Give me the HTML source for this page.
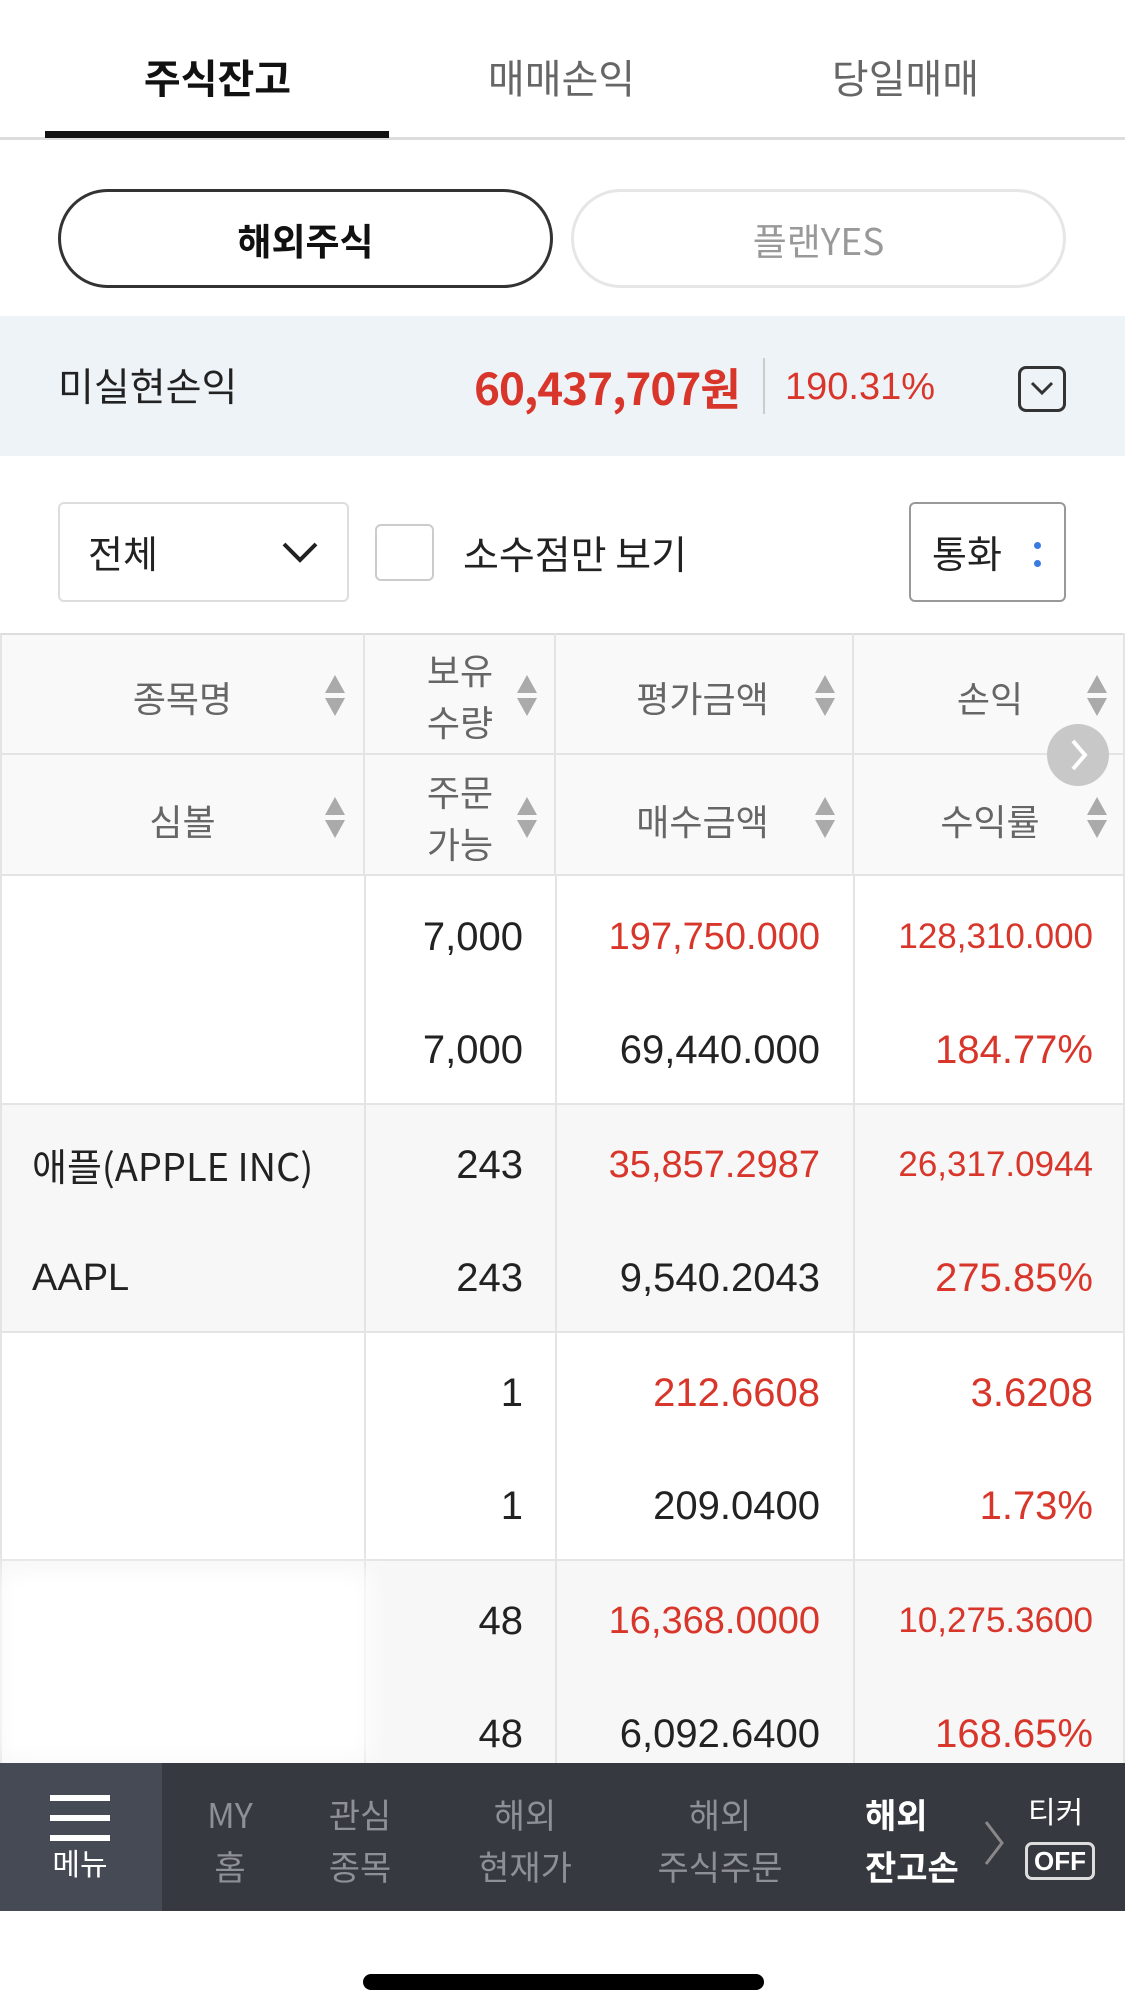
<!DOCTYPE html>
<html><head><meta charset="utf-8"><style>
*{margin:0;padding:0;box-sizing:border-box}
body{width:1125px;height:2014px;background:#fff;position:relative;overflow:hidden;font-family:"Liberation Sans","Noto Sans CJK KR",sans-serif;color:#222}
.a{position:absolute;white-space:nowrap}
.k{font-family:"Noto Sans CJK KR","Liberation Sans",sans-serif}
.tab{top:48px;font-size:40px;line-height:56px;width:345px;text-align:center}
.pill{top:189px;height:99px;border-radius:50px;font-size:37px;line-height:95px;text-align:center}
.th{color:#666;font-size:36px;text-align:center}
.cell{position:absolute;border-right:2px solid #e4e4e4;border-bottom:2px solid #e4e4e4}
.num{font-size:40px;text-align:right;line-height:50px}
.red{color:#d9362b}
.arr{position:absolute;width:0;height:0;border-left:10px solid transparent;border-right:10px solid transparent}
.nav{color:#8d9096;font-size:34px;line-height:52px;text-align:center}
</style></head><body>
<div class="a tab k" style="left:45px;font-weight:700;color:#111">주식잔고</div>
<div class="a tab k" style="left:389px;color:#666">매매손익</div>
<div class="a tab k" style="left:733px;color:#666">당일매매</div>
<div class="a" style="left:0;top:137px;width:1125px;height:3px;background:#ddd"></div>
<div class="a" style="left:45px;top:131px;width:344px;height:7px;background:#111"></div>
<div class="a pill k" style="left:58px;width:495px;border:3px solid #333;font-weight:700;color:#111">해외주식</div>
<div class="a pill k" style="left:571px;width:495px;border:3px solid #e6e6e6;color:#999">플랜YES</div>
<div class="a" style="left:0;top:316px;width:1125px;height:140px;background:#eef3f8"></div>
<div class="a k" style="left:58px;top:358px;font-size:39px;line-height:54px;color:#222">미실현손익</div>
<div class="a k" style="left:474px;top:358px;font-size:44px;line-height:56px;color:#d9362b;font-weight:700;letter-spacing:-1px">60,437,707원</div>
<div class="a" style="left:763px;top:358px;width:2px;height:56px;background:#ccc"></div>
<div class="a" style="left:785px;top:362px;font-size:38px;line-height:50px;color:#d9362b">190.31%</div>
<div class="a" style="left:1018px;top:366px;width:48px;height:46px;border:3px solid #333;border-radius:8px">
<svg width="42" height="40" style="position:absolute;left:0;top:0"><path d="M11 14 L21 24 L31 14" stroke="#333" stroke-width="3" fill="none"/></svg></div>
<div class="a" style="left:58px;top:502px;width:291px;height:100px;border:2px solid #ddd;border-radius:6px"></div>
<div class="a k" style="left:88px;top:526px;font-size:38px;line-height:52px">전체</div>
<svg class="a" style="left:280px;top:538px" width="40" height="30"><path d="M4 6 L20 22 L36 6" stroke="#222" stroke-width="4" fill="none"/></svg>
<div class="a" style="left:375px;top:524px;width:59px;height:57px;border:2px solid #ccc;border-radius:6px"></div>
<div class="a k" style="left:463px;top:526px;font-size:39px;line-height:54px">소수점만 보기</div>
<div class="a" style="left:909px;top:502px;width:157px;height:100px;border:2px solid #999;border-radius:6px"></div>
<div class="a k" style="left:932px;top:526px;font-size:38px;line-height:52px">통화</div>
<div class="a" style="left:1034px;top:542px;width:7px;height:7px;border-radius:50%;background:#3a7be0"></div>
<div class="a" style="left:1034px;top:560px;width:7px;height:7px;border-radius:50%;background:#3a7be0"></div>
<div class="a" style="left:0;top:633px;width:1125px;height:243px;background:#f9f9f9;border-top:2px solid #ddd;border-left:2px solid #e4e4e4"></div>
<div class="cell" style="left:0;top:633px;width:365px;height:122px"></div>
<div class="cell" style="left:365px;top:633px;width:191px;height:122px"></div>
<div class="cell" style="left:556px;top:633px;width:298px;height:122px"></div>
<div class="cell" style="left:854px;top:633px;width:271px;height:122px"></div>
<div class="cell" style="left:0;top:755px;width:365px;height:121px"></div>
<div class="cell" style="left:365px;top:755px;width:191px;height:121px"></div>
<div class="cell" style="left:556px;top:755px;width:298px;height:121px"></div>
<div class="cell" style="left:854px;top:755px;width:271px;height:121px"></div>
<div class="a th k" style="left:100px;top:672px;width:165px;line-height:50px">종목명</div>
<div class="a th k" style="left:405px;top:643px;width:110px;line-height:52px">보유<br>수량</div>
<div class="a th k" style="left:620px;top:672px;width:165px;line-height:50px">평가금액</div>
<div class="a th k" style="left:930px;top:672px;width:120px;line-height:50px">손익</div>
<div class="a th k" style="left:100px;top:795px;width:165px;line-height:50px">심볼</div>
<div class="a th k" style="left:405px;top:765px;width:110px;line-height:52px">주문<br>가능</div>
<div class="a th k" style="left:620px;top:795px;width:165px;line-height:50px">매수금액</div>
<div class="a th k" style="left:920px;top:795px;width:140px;line-height:50px">수익률</div>
<div class="arr" style="left:325px;top:675px;border-bottom:18px solid #aaa"></div><div class="arr" style="left:325px;top:698px;border-top:18px solid #aaa"></div>
<div class="arr" style="left:517px;top:675px;border-bottom:18px solid #aaa"></div><div class="arr" style="left:517px;top:698px;border-top:18px solid #aaa"></div>
<div class="arr" style="left:815px;top:675px;border-bottom:18px solid #aaa"></div><div class="arr" style="left:815px;top:698px;border-top:18px solid #aaa"></div>
<div class="arr" style="left:1087px;top:675px;border-bottom:18px solid #aaa"></div><div class="arr" style="left:1087px;top:698px;border-top:18px solid #aaa"></div>
<div class="arr" style="left:325px;top:797px;border-bottom:18px solid #aaa"></div><div class="arr" style="left:325px;top:820px;border-top:18px solid #aaa"></div>
<div class="arr" style="left:517px;top:797px;border-bottom:18px solid #aaa"></div><div class="arr" style="left:517px;top:820px;border-top:18px solid #aaa"></div>
<div class="arr" style="left:815px;top:797px;border-bottom:18px solid #aaa"></div><div class="arr" style="left:815px;top:820px;border-top:18px solid #aaa"></div>
<div class="arr" style="left:1087px;top:797px;border-bottom:18px solid #aaa"></div><div class="arr" style="left:1087px;top:820px;border-top:18px solid #aaa"></div>
<div class="a" style="left:1047px;top:724px;width:62px;height:62px;border-radius:50%;background:#c8c8c8"></div>
<svg class="a" style="left:1047px;top:724px" width="62" height="62"><path d="M26 17 L38 31 L26 45" stroke="#fff" stroke-width="4" fill="none"/></svg>
<div class="a" style="left:0;top:876px;width:1125px;height:227px;background:#fff"></div>
<div class="a" style="left:0;top:1103px;width:1125px;height:228px;background:#f7f7f7"></div>
<div class="a" style="left:0;top:1331px;width:1125px;height:228px;background:#fff"></div>
<div class="a" style="left:0;top:1559px;width:1125px;height:204px;background:#f7f7f7"></div>
<div class="a" style="left:0;top:1103px;width:1125px;height:2px;background:#e4e4e4"></div>
<div class="a" style="left:0;top:1331px;width:1125px;height:2px;background:#e4e4e4"></div>
<div class="a" style="left:0;top:1559px;width:1125px;height:2px;background:#e4e4e4"></div>
<div class="a" style="left:0;top:876px;width:2px;height:887px;background:#e4e4e4"></div>
<div class="a" style="left:364px;top:876px;width:2px;height:887px;background:#e4e4e4"></div>
<div class="a" style="left:555px;top:876px;width:2px;height:887px;background:#e4e4e4"></div>
<div class="a" style="left:853px;top:876px;width:2px;height:887px;background:#e4e4e4"></div>
<div class="a" style="left:1123px;top:876px;width:2px;height:887px;background:#e4e4e4"></div>
<div class="a" style="left:0;top:1570px;width:370px;height:190px;background:#fff;filter:blur(12px)"></div>

<div class="a k" style="left:32px;top:1140px;font-size:38px;line-height:50px">애플(APPLE INC)</div>
<div class="a" style="left:32px;top:1253px;font-size:38px;line-height:50px">AAPL</div>

<div class="a num" style="right:602px;top:912px">7,000</div>
<div class="a num" style="right:602px;top:1025px">7,000</div>
<div class="a num red" style="right:305px;top:912px;font-size:38px">197,750.000</div>
<div class="a num" style="right:305px;top:1025px">69,440.000</div>
<div class="a num red" style="right:32px;top:912px;font-size:35px">128,310.000</div>
<div class="a num red" style="right:32px;top:1025px">184.77%</div>

<div class="a num" style="right:602px;top:1140px">243</div>
<div class="a num" style="right:602px;top:1253px">243</div>
<div class="a num red" style="right:305px;top:1140px;font-size:38px">35,857.2987</div>
<div class="a num" style="right:305px;top:1253px">9,540.2043</div>
<div class="a num red" style="right:32px;top:1140px;font-size:35px">26,317.0944</div>
<div class="a num red" style="right:32px;top:1253px">275.85%</div>

<div class="a num" style="right:602px;top:1368px">1</div>
<div class="a num" style="right:602px;top:1481px">1</div>
<div class="a num red" style="right:305px;top:1368px">212.6608</div>
<div class="a num" style="right:305px;top:1481px">209.0400</div>
<div class="a num red" style="right:32px;top:1368px">3.6208</div>
<div class="a num red" style="right:32px;top:1481px">1.73%</div>

<div class="a num" style="right:602px;top:1596px">48</div>
<div class="a num" style="right:602px;top:1709px">48</div>
<div class="a num red" style="right:305px;top:1596px;font-size:38px">16,368.0000</div>
<div class="a num" style="right:305px;top:1709px">6,092.6400</div>
<div class="a num red" style="right:32px;top:1596px;font-size:35px">10,275.3600</div>
<div class="a num red" style="right:32px;top:1709px">168.65%</div>

<div class="a" style="left:0;top:1763px;width:1125px;height:148px;background:#36393f"></div>
<div class="a" style="left:0;top:1763px;width:162px;height:148px;background:#454a55"></div>
<div class="a" style="left:50px;top:1795px;width:60px;height:6px;background:#fff"></div>
<div class="a" style="left:50px;top:1815px;width:60px;height:6px;background:#fff"></div>
<div class="a" style="left:50px;top:1835px;width:60px;height:6px;background:#fff"></div>
<div class="a k" style="left:40px;top:1840px;width:80px;text-align:center;font-size:30px;line-height:44px;color:#fff">메뉴</div>
<div class="a nav k" style="left:190px;top:1788px;width:80px">MY<br>홈</div>
<div class="a nav k" style="left:310px;top:1788px;width:100px">관심<br>종목</div>
<div class="a nav k" style="left:460px;top:1788px;width:130px">해외<br>현재가</div>
<div class="a nav k" style="left:640px;top:1788px;width:160px">해외<br>주식주문</div>
<div class="a nav k" style="left:865px;top:1788px;width:100px;color:#fff;font-weight:700;overflow:hidden;text-align:left">해외<br>잔고손</div>
<svg class="a" style="left:980px;top:1818px" width="30" height="50"><path d="M6 4 L22 25 L6 46" stroke="#888" stroke-width="3" fill="none"/></svg>
<div class="a k" style="left:1028px;top:1788px;font-size:30px;line-height:44px;color:#fff">티커</div>
<div class="a" style="left:1025px;top:1842px;width:70px;height:38px;border:3px solid #ddd;border-radius:7px;color:#fff;font-weight:700;font-size:26px;line-height:32px;text-align:center">OFF</div>
<div class="a" style="left:363px;top:1974px;width:401px;height:16px;border-radius:8px;background:#000"></div>
</body></html>
